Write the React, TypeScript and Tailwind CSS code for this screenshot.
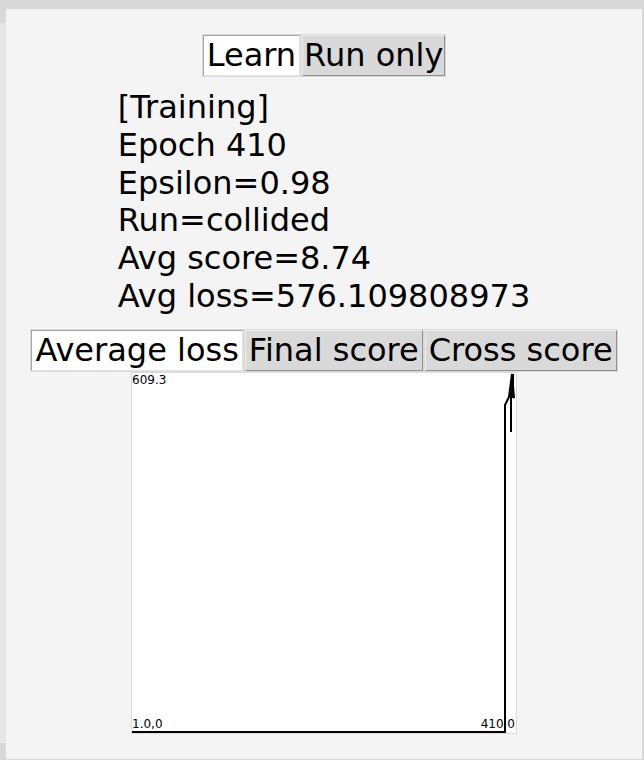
function Btn({ label, active, tight }: { label: string; active?: boolean; tight?: boolean }) {
  const pad = tight ? 'px-px' : 'px-[3px]'
  return (
    <div className="border border-[#dadada]">
      <div
        className={
          (active
            ? 'border border-t-[#a4a4a4] border-l-[#a4a4a4] border-b-[#e4e4e4] border-r-[#e4e4e4] bg-white'
            : 'border border-t-[#ededed] border-l-[#ededed] border-b-[#8e8e8e] border-r-[#8e8e8e] bg-[#d9d9d9]') +
          ' py-px text-[32px] leading-[37px] whitespace-nowrap ' +
          pad
        }
      >
        {label}
      </div>
    </div>
  )
}

const lines = [
  '[Training]',
  'Epoch 410',
  'Epsilon=0.98',
  'Run=collided',
  'Avg score=8.74',
  'Avg loss=576.109808973',
]

export default function App() {
  return (
    <div className="flex h-[760px] w-[644px] overflow-hidden bg-[#d9d9d9] pt-[9px] font-['DejaVu_Sans',sans-serif] text-black">
      <div className="w-[6px] shrink-0">
        <div className="mt-[14px] h-[720px] bg-[#e6e6e6]" />
      </div>
      <div className="flex h-[750px] w-[636px] shrink-0 flex-col items-center bg-[#f4f4f4] pt-[25px]">
        <div className="flex">
          <Btn label="Learn" active />
          <Btn label="Run only" tight />
        </div>

        <div className="mt-[12px] text-[32px] leading-[37.8px]">
          {lines.map((l) => (
            <div key={l} className="whitespace-nowrap">{l}</div>
          ))}
        </div>

        <div className="mt-[13px] flex">
          <Btn label="Average loss" active />
          <Btn label="Final score" />
          <Btn label="Cross score" />
        </div>

        {/* chart */}
        <div className="relative h-[362px] w-[386px] border border-[#dcdcdc] bg-white">
          <svg
            className="absolute left-0 top-0"
            width="384"
            height="360"
            viewBox="132 373 384 360"
          >
            <line x1="132" y1="732" x2="506" y2="732" stroke="black" strokeWidth="2" />
            <polyline
              points="505,733 505,405 509,397 512,374 513,386 514,398 511,392 511,432"
              fill="none"
              stroke="black"
              strokeWidth="2"
            />
            <line x1="512.5" y1="374" x2="512.5" y2="398" stroke="black" strokeWidth="3" />
          </svg>
          <span className="absolute left-0 top-0 text-[12px] leading-[14px]">609.3</span>
          <span className="absolute bottom-[2px] left-0 text-[12px] leading-[14px]">1.0,0</span>
          <span className="absolute bottom-[2px] right-[1px] whitespace-pre text-[12px] leading-[14px]">410 0</span>
        </div>
      </div>
    </div>
  )
}
